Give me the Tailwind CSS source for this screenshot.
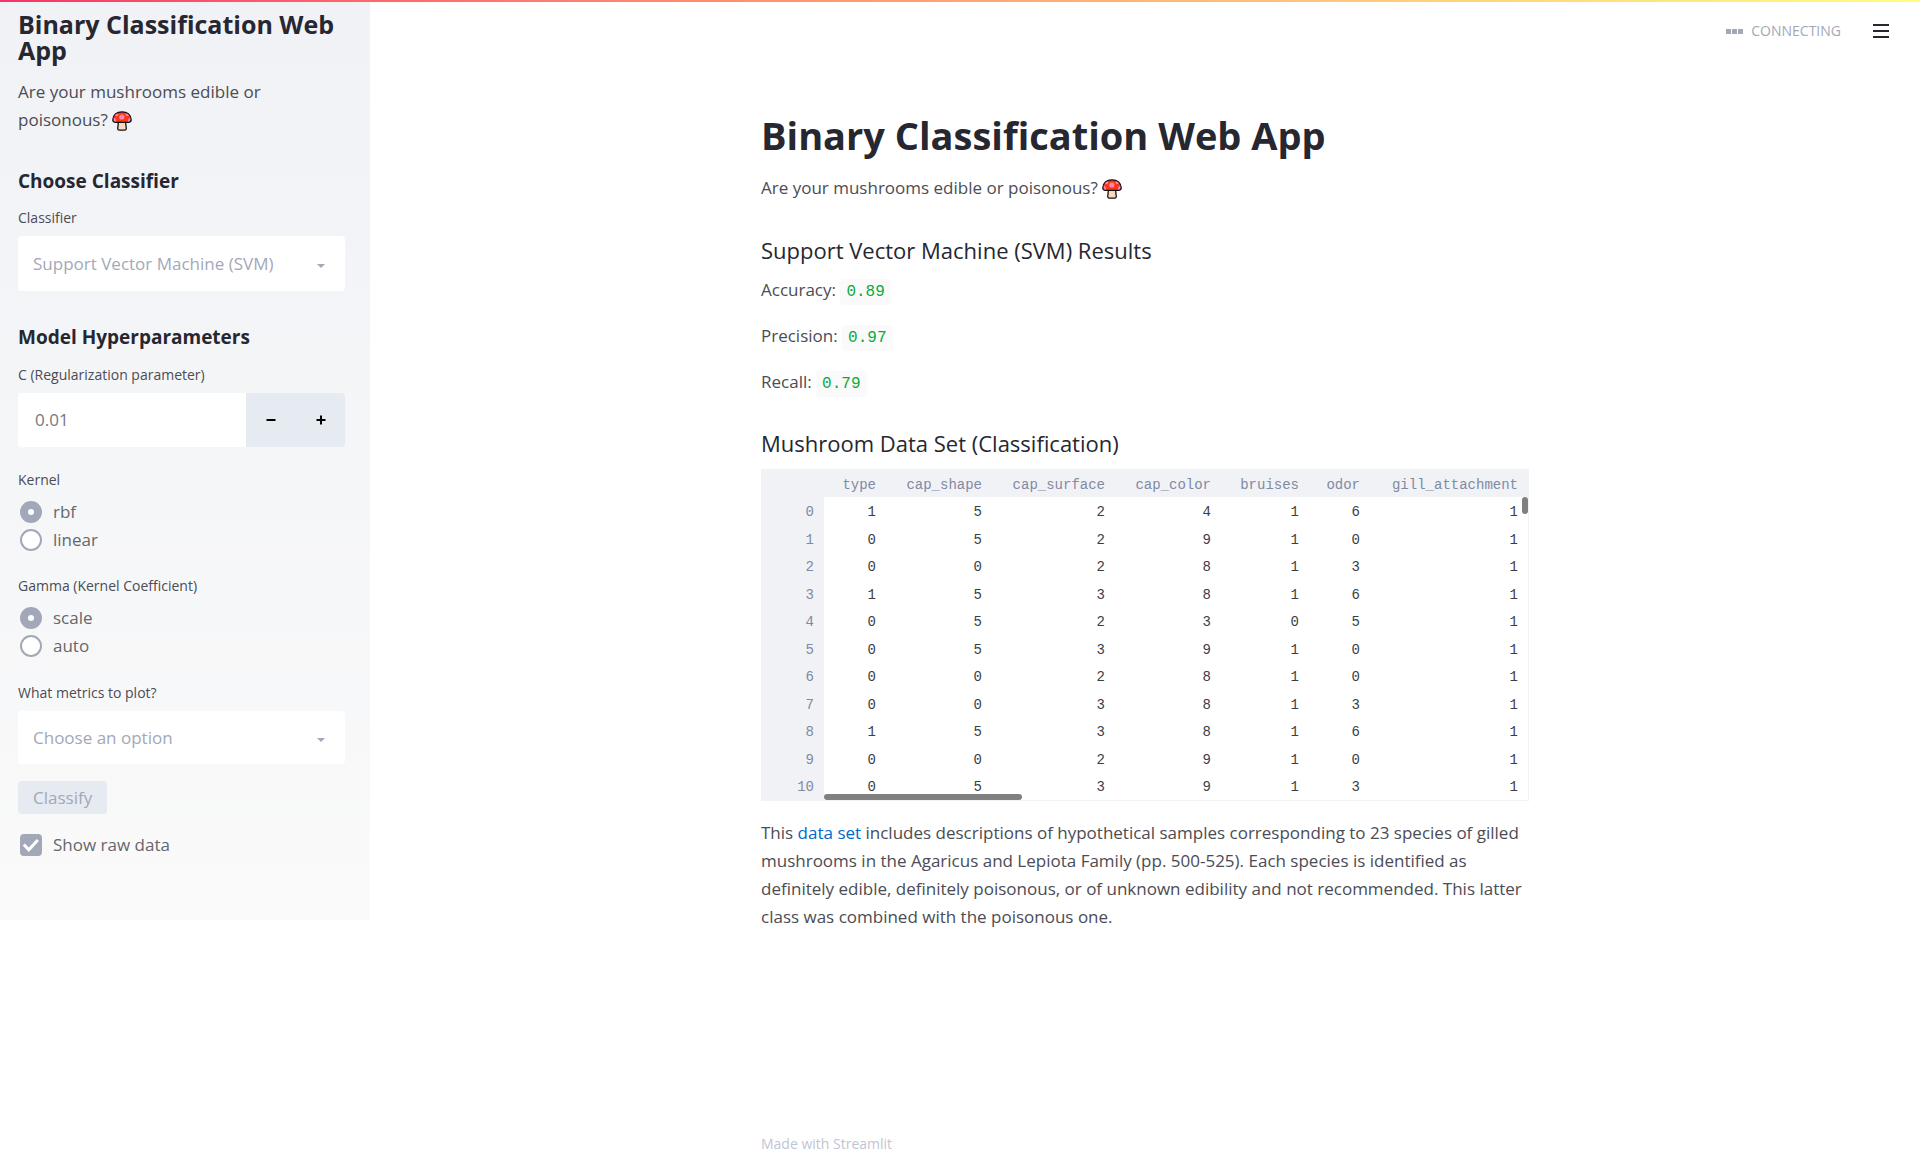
<!DOCTYPE html>
<html lang="en">
<head>
<meta charset="utf-8">
<meta name="viewport" content="width=device-width, initial-scale=1">
<title>Binary Classification Web App</title>
<script src="https://cdn.jsdelivr.net/npm/@tailwindcss/browser@4"></script>
</head>
<body class="bg-white font-['Open_Sans',sans-serif] text-[17px] leading-[28px] text-[#4b4c54]">
<svg class="hidden" aria-hidden="true">
  <symbol id="mushroom" viewBox="0 0 20 20">
    <path d="M6.5 10.5h7l.8 7.2q-.2 1.5-1.6 1.5H7.3q-1.4 0-1.6-1.5z" fill="#fbd8c0" stroke="#111" stroke-width="1.3"/>
    <path d="M.8 8.800C1 4 4.6.8 10 .8s9 3.2 9.2 8q0 2.500-2.700 2.500h-13Q.8 11.300.8 8.800z" fill="#fa3913"/>
    <circle cx="9.8" cy="6" r="2.6" fill="#fc82b4"/>
    <circle cx="4.5" cy="3.600" r="1.7" fill="#fc82b4"/>
    <circle cx="15.3" cy="3.400" r="1.7" fill="#fc82b4"/>
    <path d="M1.200 6.500q3 .3 3 4.700H3q-2-.2-2-2.500zM18.800 6.500q-3 .3-3 4.700H17q2-.2 2-2.500z" fill="#fc82b4"/>
    <path d="M.8 8.800C1 4 4.600.8 10 .8s9 3.200 9.200 8q0 2.500-2.700 2.500h-13Q.8 11.300.8 8.800z" fill="none" stroke="#111" stroke-width="1.3"/>
  </symbol>
</svg>
<div class="absolute inset-x-0 top-0 h-0.5 bg-linear-to-r from-[#f63366] to-[#fffd80]"></div>
<div class="flex min-h-screen items-start">
  <aside class="w-[370px] shrink-0 bg-linear-to-b from-[#f0f2f6] to-[#fafafa] pt-[11px] pr-[25px] pb-[61px] pl-[18px]">
    <h1 class="text-[25px] leading-[26px] font-bold text-[#262730]">Binary Classification Web App</h1>
    <p class="mt-[15px]">Are your mushrooms edible or poisonous? <svg class="inline-block size-5 align-text-bottom" role="img" aria-label="mushroom"><use href="#mushroom"/></svg></p>

    <h2 class="mt-[33px] text-[19px] leading-[28px] font-bold text-[#262730]">Choose Classifier</h2>
    <label for="classifier" class="mt-[13px] block text-[14px] leading-[20px]">Classifier</label>
    <div class="relative mt-2">
      <select id="classifier" disabled class="block h-[55px] w-full appearance-none rounded bg-white px-[15px] text-[#a3a8b8] opacity-100"><option>Support Vector Machine (SVM)</option></select>
      <svg class="pointer-events-none absolute top-1/2 right-5 h-1 w-2" viewBox="0 0 8 4" fill="#a3a8b8"><path d="M0 0h8L4 4z"/></svg>
    </div>

    <h2 class="mt-[32px] text-[19px] leading-[28px] font-bold text-[#262730]">Model Hyperparameters</h2>
    <label for="c" class="mt-[14px] block text-[14px] leading-[20px]">C (Regularization parameter)</label>
    <div class="mt-2 flex h-[54px] overflow-hidden rounded bg-white">
      <input id="c" type="text" inputmode="decimal" value="0.01" class="min-w-0 flex-1 bg-white px-[17px] text-[#77787f]">
      <button type="button" aria-label="Decrease" class="flex w-[50px] items-center justify-center bg-[#e6eaf1]"><svg class="size-[10px]" viewBox="0 0 10 10"><path d="M0.500 5h9" stroke="#000" stroke-width="2.2"/></svg></button>
      <button type="button" aria-label="Increase" class="flex w-[49px] items-center justify-center bg-[#e6eaf1]"><svg class="size-[10px]" viewBox="0 0 10 10"><path d="M0.500 5h9M5 .5v9" stroke="#000" stroke-width="2"/></svg></button>
    </div>

    <fieldset class="mt-[23px]">
      <legend class="text-[14px] leading-[20px]">Kernel</legend>
      <div class="mt-2 text-[#66676d]">
        <label class="flex items-center gap-[11px] pl-0.5"><input type="radio" name="kernel" checked class="size-[22px] appearance-none rounded-full border-2 border-[#a3a8b8] bg-white checked:border-8"><span>rbf</span></label>
        <label class="flex items-center gap-[11px] pl-0.5"><input type="radio" name="kernel" class="size-[22px] appearance-none rounded-full border-2 border-[#a3a8b8] bg-white checked:border-8"><span>linear</span></label>
      </div>
    </fieldset>

    <fieldset class="mt-[22px]">
      <legend class="text-[14px] leading-[20px]">Gamma (Kernel Coefficient)</legend>
      <div class="mt-2 text-[#66676d]">
        <label class="flex items-center gap-[11px] pl-0.5"><input type="radio" name="gamma" checked class="size-[22px] appearance-none rounded-full border-2 border-[#a3a8b8] bg-white checked:border-8"><span>scale</span></label>
        <label class="flex items-center gap-[11px] pl-0.5"><input type="radio" name="gamma" class="size-[22px] appearance-none rounded-full border-2 border-[#a3a8b8] bg-white checked:border-8"><span>auto</span></label>
      </div>
    </fieldset>

    <label for="metrics" class="mt-[23px] block text-[14px] leading-[20px]">What metrics to plot?</label>
    <div class="relative mt-2">
      <select id="metrics" disabled class="block h-[53px] w-full appearance-none rounded bg-white px-[15px] text-[#a3a8b8] opacity-100"><option>Choose an option</option></select>
      <svg class="pointer-events-none absolute top-1/2 right-5 h-1 w-2" viewBox="0 0 8 4" fill="#a3a8b8"><path d="M0 0h8L4 4z"/></svg>
    </div>
    <button type="button" disabled class="mt-[17px] block h-[33px] rounded bg-[#e6eaf1] px-[15px] text-[#a3a8b8]">Classify</button>
    <label class="mt-[17px] flex items-center gap-[11px] pl-0.5 text-[#66676d]">
      <span class="relative size-[22px]">
        <input type="checkbox" checked class="block size-[22px] appearance-none rounded bg-[#a3a8b8]">
        <svg class="pointer-events-none absolute inset-0 size-[22px]" viewBox="0 0 22 22" fill="none" stroke="#fff" stroke-width="3"><path d="M3.8 10.500l5 5.200L17.800 6"/></svg>
      </span>
      <span>Show raw data</span>
    </label>
  </aside>

  <div class="flex min-h-screen min-w-0 flex-1 flex-col">
    <header class="flex h-[62px] items-center justify-end pr-[31px]">
      <div class="flex items-center gap-2 text-[14px] leading-[20px] text-[#a3a8b8]">
        <svg class="h-[5px] w-[17px]" viewBox="0 0 17 5" fill="#a3a8b8"><path d="M0 0h5v5H0zM6 0h5v5H6zM12 0h5v5h-5z"/></svg>
        <span>CONNECTING</span>
      </div>
      <button type="button" aria-label="Menu" class="ml-8"><svg class="h-[14px] w-4" viewBox="0 0 16 14" fill="#262730"><path d="M0 0h16v2H0zM0 6h16v2H0zM0 12h16v2H0z"/></svg></button>
    </header>

    <main class="mx-auto w-full max-w-3xl flex-1 pt-[49px]">
      <h1 class="text-[38px] leading-[48px] font-bold text-[#262730]">Binary Classification Web App</h1>
      <p class="mt-[15px]">Are your mushrooms edible or poisonous? <svg class="inline-block size-5 align-text-bottom" role="img" aria-label="mushroom"><use href="#mushroom"/></svg></p>

      <h3 class="mt-[34px] text-[22px] leading-[28px] font-medium text-[#262730]">Support Vector Machine (SVM) Results</h3>
      <div class="mt-[12px] flex flex-col gap-[18px]">
        <p>Accuracy: <code class="rounded bg-[#fafafa] px-1.5 py-1 font-['Liberation_Mono',monospace] text-[16px] leading-[18px] text-[#09ab3b]">0.89</code></p>
        <p>Precision: <code class="rounded bg-[#fafafa] px-1.5 py-1 font-['Liberation_Mono',monospace] text-[16px] leading-[18px] text-[#09ab3b]">0.97</code></p>
        <p>Recall: <code class="rounded bg-[#fafafa] px-1.5 py-1 font-['Liberation_Mono',monospace] text-[16px] leading-[18px] text-[#09ab3b]">0.79</code></p>
      </div>

      <h3 class="mt-[33px] text-[22px] leading-[28px] font-medium text-[#262730]">Mushroom Data Set (Classification)</h3>
      <div class="relative mt-[12px] overflow-hidden border-r border-b border-[#f0f2f6]">
        <table class="w-full table-fixed border-collapse text-right font-['Liberation_Mono',monospace] text-[14px] leading-[24px] text-[#3c3d46]">
          <colgroup>
            <col class="w-[63px]"><col class="w-[62px]"><col class="w-[106px]"><col class="w-[123px]"><col class="w-[106px]"><col class="w-[88px]"><col class="w-[61px]"><col>
          </colgroup>
          <thead class="bg-[#f0f2f6] text-[#808aa3]">
            <tr class="h-[28px] align-top *:pt-1 *:pr-[10px] *:font-normal">
              <td></td><th scope="col">type</th><th scope="col">cap_shape</th><th scope="col">cap_surface</th><th scope="col">cap_color</th><th scope="col">bruises</th><th scope="col">odor</th><th scope="col">gill_attachment</th>
            </tr>
          </thead>
          <tbody id="rows"></tbody>
        </table>
        <div class="absolute bottom-0 left-[63px] h-1.5 w-[198px] rounded-full bg-[#808080]"></div>
        <div class="absolute top-[28px] right-0 h-[17px] w-1.5 rounded-full bg-[#808080]"></div>
      </div>

      <p class="mt-[18px]">This <a href="#" class="text-[#0068c9]">data set</a> includes descriptions of hypothetical samples corresponding to 23 species of gilled mushrooms in the Agaricus and Lepiota Family (pp. 500-525). Each species is identified as definitely edible, definitely poisonous, or of unknown edibility and not recommended. This latter class was combined with the poisonous one.</p>
    </main>

    <footer class="mx-auto w-full max-w-3xl pb-[10px] text-[14px] leading-[20px] text-[#bfc5d3]">Made with <a href="#">Streamlit</a></footer>
  </div>
</div>
<script>
  const data = [
    [1,5,2,4,1,6,1],[0,5,2,9,1,0,1],[0,0,2,8,1,3,1],[1,5,3,8,1,6,1],[0,5,2,3,0,5,1],[0,5,3,9,1,0,1],
    [0,0,2,8,1,0,1],[0,0,3,8,1,3,1],[1,5,3,8,1,6,1],[0,0,2,9,1,0,1],[0,5,3,9,1,3,1]
  ];
  document.getElementById('rows').innerHTML = data.map((row, i) =>
    `<tr class="h-[28px] align-top even:h-[27px] *:pt-[3px] *:pr-[10px]"><th scope="row" class="bg-[#f0f2f6] font-normal text-[#808aa3]">${i}</th>${row.map(v => `<td>${v}</td>`).join('')}</tr>`
  ).join('');
</script>
</body>
</html>
